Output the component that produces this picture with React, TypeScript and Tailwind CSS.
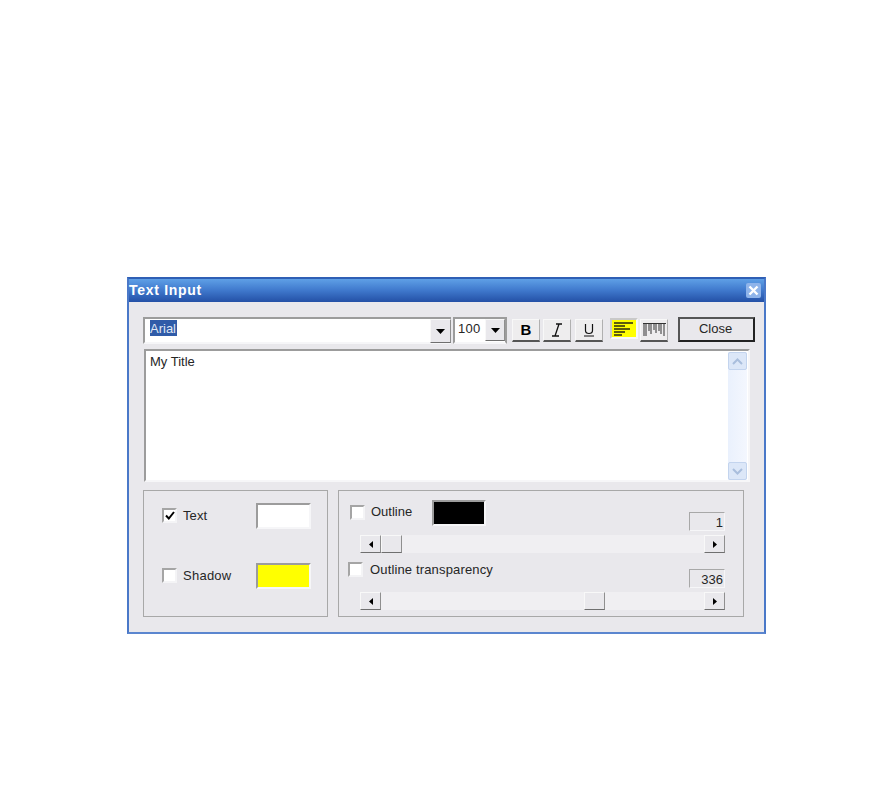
import React from "react";

const raised = "border border-t-[#f8f8f8] border-l-[#f8f8f8] border-r-[#8f8f8f] border-b-[#6f6f6f] bg-[#e9e8ec]";
const sunken = "border-2 border-t-[#9c9c9c] border-l-[#9c9c9c] border-r-[#f6f6f8] border-b-[#f6f6f8]";

function Caret({ dir = "down" }: { dir?: "down" | "left" | "right" }) {
  if (dir === "down")
    return (
      <svg width="9" height="5" viewBox="0 0 9 5"><path d="M0 0h9L4.5 5z" fill="#000" /></svg>
    );
  return (
    <svg width="4" height="7" viewBox="0 0 4 7">
      <path d={dir === "left" ? "M4 0v7L0 3.5z" : "M0 0v7l4-3.5z"} fill="#000" />
    </svg>
  );
}

function Check({ checked, className = "" }: { checked?: boolean; className?: string }) {
  return (
    <div className={`w-[15px] h-[15px] flex items-center justify-center bg-white border-2 border-t-[#a5a5a5] border-l-[#a5a5a5] border-r-[#f4f4f6] border-b-[#f4f4f6] shrink-0 ${className}`}>
      {checked && (
        <svg width="10" height="9" viewBox="0 0 10 9">
          <path d="M1 4.5l2.8 3L9 1" fill="none" stroke="#000" strokeWidth="2" />
        </svg>
      )}
    </div>
  );
}

function Swatch({ color, className = "w-[55px]" }: { color: string; className?: string }) {
  return <div className={`h-[26px] shrink-0 ${sunken} ${className}`} style={{ backgroundColor: color }} />;
}

function ToolBtn({ children, className = "" }: { children: React.ReactNode; className?: string }) {
  return (
    <div className={`w-[28px] h-[23px] shrink-0 mt-[2px] flex items-center justify-center bg-[#eeedee] border-t border-x border-t-[#f8f8f8] border-l-[#f8f8f8] border-r-[#b0b0b0] border-b-2 border-b-[#555] ${className}`}>
      {children}
    </div>
  );
}

function Slider({ thumbLeft }: { thumbLeft: number }) {
  return (
    <div className="relative h-[18px] w-[365px] bg-[#f0eff2] flex justify-between">
      <div className={`w-[21px] h-[18px] flex items-center justify-center ${raised}`}><Caret dir="left" /></div>
      <div className={`w-[21px] h-[18px] flex items-center justify-center ${raised}`}><Caret dir="right" /></div>
      <div className={`absolute top-0 w-[21px] h-[18px] ${raised}`} style={{ left: thumbLeft }} />
    </div>
  );
}

function ValueBox({ value }: { value: string }) {
  return (
    <div className="w-[36px] h-[19px] pr-[1px] text-right leading-[19px] border border-t-[#a8a8a8] border-l-[#a8a8a8] border-r-[#f6f6f8] border-b-[#f6f6f8]">
      {value}
    </div>
  );
}

export default function App() {
  return (
    <div className="w-[893px] h-[808px] bg-white pt-[277px] pl-[127px] text-[13px] text-[#262626] font-['Liberation_Sans',Arial,sans-serif]">
      <div className="w-[639px] h-[357px] flex flex-col border-2 border-t-[#2f5fb5] border-[#4a78c8] border-b-[#5b86cf] bg-[#e9e8ec]">
        <div className="h-[23px] shrink-0 flex items-center justify-between pr-[3px] bg-gradient-to-b from-[#5fa0e6] via-[#3f78cc] to-[#2450a6]">
          <span className="text-white font-bold text-[14px] tracking-[0.7px]">Text Input</span>
          <div className="w-[15px] h-[15px] rounded-[2px] bg-[#8fb4ea] flex items-center justify-center">
            <svg width="11" height="11" viewBox="0 0 11 11">
              <path d="M1.5 1.5l8 8M9.5 1.5l-8 8" stroke="#fff" strokeWidth="2.4" />
            </svg>
          </div>
        </div>

        <div className="flex-1 flex flex-col pl-[14px] pr-[9px] pt-[15px]">
          <div className="flex items-start h-[27px]">
            <div className={`w-[308px] h-[27px] shrink-0 bg-white flex items-start justify-between !border-r-0 ${sunken}`}>
              <span className="ml-[5px] mt-[1px] bg-[#2f5ba8] text-[#dfe6f4] h-[16px] leading-[18px] pr-[1px]">Arial</span>
              <div className={`w-[21px] h-[24px] flex items-center justify-center ${raised}`}><Caret /></div>
            </div>
            <div className={`ml-[2px] w-[54px] h-[27px] shrink-0 bg-white flex items-start justify-between !border-r-[#9c9c9c] ${sunken}`}>
              <span className="ml-[3px] mt-[1px] leading-[18px] tracking-[0.3px]">100</span>
              <div className={`w-[20px] h-[22px] flex items-center justify-center ${raised}`}><Caret /></div>
            </div>
            <ToolBtn className="ml-[5px]"><span className="font-bold text-[15px] text-black">B</span></ToolBtn>
            <ToolBtn className="ml-[3px]">
              <svg width="14" height="14" viewBox="0 0 14 14">
                <path d="M6 1h6M9 1L5 13M2 13h7" fill="none" stroke="#111" strokeWidth="1.3" />
              </svg>
            </ToolBtn>
            <ToolBtn className="ml-[4px]">
              <svg width="12" height="14" viewBox="0 0 12 14">
                <path d="M2.5 1v6.5q0 3 3.5 3t3.5-3V1M1 13h10" fill="none" stroke="#111" strokeWidth="1.2" />
              </svg>
            </ToolBtn>
            <div className="ml-[7px] mt-[1px] w-[28px] h-[21px] shrink-0 flex items-center justify-center bg-[#ffff00] border-2 border-t-[#c9c9c9] border-l-[#c9c9c9] border-r-[#f8f8f8] border-b-[#f8f8f8]">
              <svg width="20" height="14" viewBox="0 0 20 14">
                <path d="M0 1h19M0 4h11M0 7h16M0 10h11M0 13h8" stroke="#2a2a10" strokeWidth="1.7" />
              </svg>
            </div>
            <ToolBtn className="ml-[2px]">
              <svg width="23" height="14" viewBox="0 0 23 14">
                <path d="M0 .5h23" stroke="#333" strokeWidth="1" />
                <path d="M1 0v13M3 0v13M6 0v8M8 0v11M11 0v7M13 0v10M16 0v8M18 0v11M21 0v13" stroke="#333" strokeWidth="1" />
              </svg>
            </ToolBtn>
            <div className="ml-[10px] w-[77px] h-[25px] shrink-0 pb-[2px] pr-[2px] border-2 border-t-[#555] border-l-[#555] border-r-[#222] border-b-[#222] flex items-center justify-center">
              Close
            </div>
          </div>

          <div className={`ml-[1px] mt-[5px] w-[606px] h-[133px] bg-white flex justify-between ${sunken}`}>
            <span className="ml-[4px] mt-[3px] leading-[16px]">My Title</span>
            <div className="w-[19px] mr-[1px] mt-[1px] bg-gradient-to-r from-[#eaf1fd] to-[#f4f7fe] flex flex-col justify-between">
              <div className="h-[18px] rounded-[2px] bg-[#dce7f8] border border-[#c3d4ee] flex items-center justify-center">
                <svg width="11" height="7" viewBox="0 0 11 7"><path d="M1 6l4.5-4.5L10 6" fill="none" stroke="#a9bedd" strokeWidth="2" /></svg>
              </div>
              <div className="h-[18px] rounded-[2px] bg-[#dce7f8] border border-[#c3d4ee] flex items-center justify-center">
                <svg width="11" height="7" viewBox="0 0 11 7"><path d="M1 1l4.5 4.5L10 1" fill="none" stroke="#a9bedd" strokeWidth="2" /></svg>
              </div>
            </div>
          </div>

          <div className="mt-[8px] flex items-start">
            <div className="w-[185px] h-[127px] shrink-0 border border-[#a8a8a8] pl-[18px] pt-[12px] flex flex-col gap-[35px]">
              <div className="flex items-center h-[25px]">
                <Check checked />
                <span className="ml-[6px] w-[73px] tracking-[0.1px]">Text</span>
                <Swatch color="#ffffff" />
              </div>
              <div className="flex items-center h-[25px]">
                <Check />
                <span className="ml-[6px] w-[73px] tracking-[0.25px]">Shadow</span>
                <Swatch color="#ffff00" />
              </div>
            </div>

            <div className="ml-[10px] w-[406px] h-[127px] shrink-0 border border-[#a8a8a8] pl-[9px] pt-[9px] flex flex-col">
              <div className="flex items-start h-[31px]">
                <Check checked={false} className="ml-[2px] mt-[5px]" />
                <span className="ml-[6px] mt-[4px] w-[61px] leading-[16px]">Outline</span>
                <Swatch color="#000000" className="w-[54px]" />
                <div className="ml-[203px] mt-[12px]"><ValueBox value="1" /></div>
              </div>
              <div className="ml-[12px] mt-[4px]"><Slider thumbLeft={21} /></div>
              <div className="flex items-start h-[39px]">
                <Check className="mt-[9px]" />
                <span className="ml-[7px] mt-[9px] w-[319px] leading-[16px] tracking-[0.15px]">Outline transparency</span>
                <div className="mt-[16px]"><ValueBox value="336" /></div>
              </div>
              <div className="ml-[12px]"><Slider thumbLeft={224} /></div>
            </div>
          </div>
        </div>
      </div>
    </div>
  );
}
